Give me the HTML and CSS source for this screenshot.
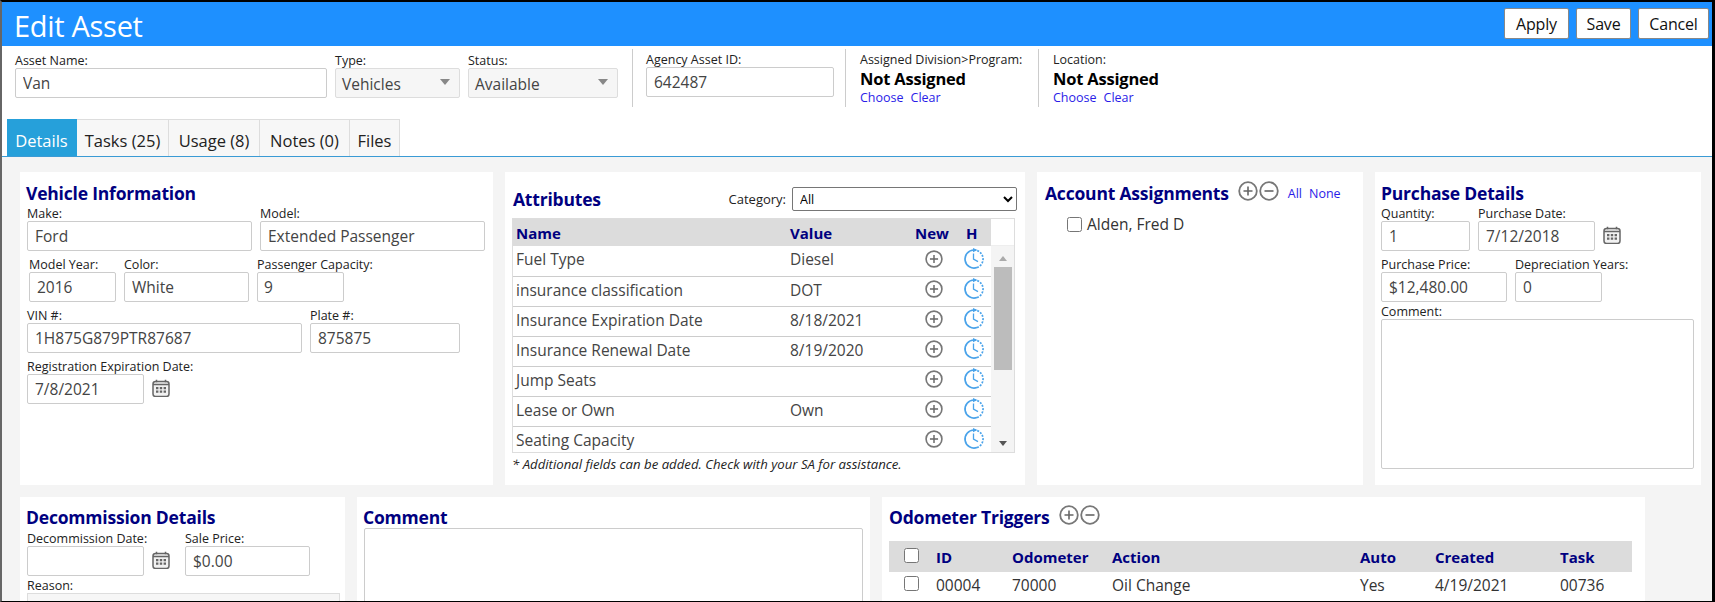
FILE: index.html
```html
<!DOCTYPE html>
<html lang="en">
<head>
  <meta charset="UTF-8">
  <meta name="viewport" content="width=device-width, initial-scale=1.0">
  <title>Edit Asset</title>
  <link rel="stylesheet" href="styles.css">
</head>
<body>
  <svg class="sprites" aria-hidden="true">
    <symbol id="plus" viewBox="0 0 20 20">
      <circle cx="10" cy="10" r="8.8" fill="none" stroke="#777" stroke-width="1.8"/>
      <path d="M10 5.5v9M5.5 10h9" stroke="#666" stroke-width="1.6"/>
    </symbol>
    <symbol id="minus" viewBox="0 0 20 20">
      <circle cx="10" cy="10" r="8.8" fill="none" stroke="#777" stroke-width="1.8"/>
      <path d="M5.5 10h9" stroke="#666" stroke-width="1.6"/>
    </symbol>
    <symbol id="clock" viewBox="0 0 22 22">
      <path d="M11 2A9 9 0 1 0 14 19.5" fill="none" stroke="#4aa3ea" stroke-width="1.7"/>
      <path d="M11 2A9 9 0 0 1 14 19.5" fill="none" stroke="#4aa3ea" stroke-width="1.7" stroke-dasharray="2 1.3"/>
      <path d="M10 0l4.5 2-4.5 2.2z" fill="#4aa3ea"/>
      <path d="M10.5 5.5V11l4.5 2.6" fill="none" stroke="#4aa3ea" stroke-width="1.3"/>
    </symbol>
    <symbol id="calendar" viewBox="0 0 18 18">
      <rect x="1" y="2.5" width="16" height="15" rx="2.5" fill="#f2f2f2" stroke="#666" stroke-width="1.5"/>
      <path d="M1 5.5h16M4.5 0.8v2.5M13.5 0.8v2.5" stroke="#666" stroke-width="1.5"/>
      <path d="M4 8h2.4v2.2H4zM7.8 8h2.4v2.2H7.8zM11.6 8H14v2.2h-2.4zM4 11.6h2.4v2.2H4zM7.8 11.6h2.4v2.2H7.8zM11.6 11.6H14v2.2h-2.4z" fill="#666"/>
    </symbol>
  </svg>

  <div class="frame">
    <header class="title-bar">
      <h1>Edit Asset</h1>
      <div class="actions">
        <button class="action">Apply</button>
        <button class="action">Save</button>
        <button class="action">Cancel</button>
      </div>
    </header>

    <section class="info-bar">
      <div class="info-group first">
        <div class="field w-312"><label>Asset Name:</label><input value="Van"></div>
        <div class="field w-125"><label>Type:</label><div class="fake-select">Vehicles</div></div>
        <div class="field w-150"><label>Status:</label><div class="fake-select">Available</div></div>
      </div>
      <div class="info-group agency">
        <div class="field w-188"><label>Agency Asset ID:</label><input value="642487"></div>
      </div>
      <div class="info-group division">
        <div class="assigned">
          <label>Assigned Division&gt;Program:</label>
          <strong>Not Assigned</strong>
          <div class="links"><a href="#">Choose</a><a href="#">Clear</a></div>
        </div>
      </div>
      <div class="info-group location">
        <div class="assigned">
          <label>Location:</label>
          <strong>Not Assigned</strong>
          <div class="links"><a href="#">Choose</a><a href="#">Clear</a></div>
        </div>
      </div>
    </section>

    <nav class="tabs">
      <a class="tab active" href="#">Details</a>
      <a class="tab" href="#">Tasks (25)</a>
      <a class="tab" href="#">Usage (8)</a>
      <a class="tab" href="#">Notes (0)</a>
      <a class="tab" href="#">Files</a>
    </nav>

    <main class="content">
      <div class="card-row top">
        <section class="card vehicle">
          <h2>Vehicle Information</h2>
          <div class="form-row">
            <div class="field w-225"><label>Make:</label><input value="Ford"></div>
            <div class="field w-225"><label>Model:</label><input value="Extended Passenger"></div>
          </div>
          <div class="form-row indent">
            <div class="field w-87"><label>Model Year:</label><input value="2016"></div>
            <div class="field w-125"><label>Color:</label><input value="White"></div>
            <div class="field w-87"><label>Passenger Capacity:</label><input class="tight" value="9"></div>
          </div>
          <div class="form-row">
            <div class="field w-275"><label>VIN #:</label><input value="1H875G879PTR87687"></div>
            <div class="field w-150"><label>Plate #:</label><input value="875875"></div>
          </div>
          <div class="form-row">
            <div class="field w-117"><label class="nowrap">Registration Expiration Date:</label><input value="7/8/2021"></div>
            <svg class="icon-cal"><use href="#calendar"/></svg>
          </div>
        </section>

        <section class="card attributes">
          <div class="attr-head">
            <h2>Attributes</h2>
            <div class="category">
              <label>Category:</label>
              <select><option>All</option></select>
            </div>
          </div>
          <div class="attr-box">
            <div class="attr-table">
              <table>
                <thead>
                  <tr><th class="c-name">Name</th><th class="c-value">Value</th><th class="c-new">New</th><th class="c-h">H</th></tr>
                </thead>
                <tbody>
                  <tr><td>Fuel Type</td><td>Diesel</td><td class="c-new"><svg class="icon"><use href="#plus"/></svg></td><td class="c-h"><svg class="icon-clock"><use href="#clock"/></svg></td></tr>
                  <tr><td>insurance classification</td><td>DOT</td><td class="c-new"><svg class="icon"><use href="#plus"/></svg></td><td class="c-h"><svg class="icon-clock"><use href="#clock"/></svg></td></tr>
                  <tr><td>Insurance Expiration Date</td><td>8/18/2021</td><td class="c-new"><svg class="icon"><use href="#plus"/></svg></td><td class="c-h"><svg class="icon-clock"><use href="#clock"/></svg></td></tr>
                  <tr><td>Insurance Renewal Date</td><td>8/19/2020</td><td class="c-new"><svg class="icon"><use href="#plus"/></svg></td><td class="c-h"><svg class="icon-clock"><use href="#clock"/></svg></td></tr>
                  <tr><td>Jump Seats</td><td></td><td class="c-new"><svg class="icon"><use href="#plus"/></svg></td><td class="c-h"><svg class="icon-clock"><use href="#clock"/></svg></td></tr>
                  <tr><td>Lease or Own</td><td>Own</td><td class="c-new"><svg class="icon"><use href="#plus"/></svg></td><td class="c-h"><svg class="icon-clock"><use href="#clock"/></svg></td></tr>
                  <tr class="last"><td>Seating Capacity</td><td></td><td class="c-new"><svg class="icon"><use href="#plus"/></svg></td><td class="c-h"><svg class="icon-clock"><use href="#clock"/></svg></td></tr>
                </tbody>
              </table>
            </div>
            <div class="scrollbar">
              <div class="scroll-corner"></div>
              <div class="scroll-track">
                <span class="arrow up"></span>
                <div class="thumb"></div>
                <span class="arrow down"></span>
              </div>
            </div>
          </div>
          <p class="note">* Additional fields can be added. Check with your SA for assistance.</p>
        </section>

        <section class="card accounts">
          <div class="acct-head">
            <h2>Account Assignments</h2>
            <svg class="icon-sm"><use href="#plus"/></svg>
            <svg class="icon-sm"><use href="#minus"/></svg>
            <div class="links"><a href="#">All</a><a href="#">None</a></div>
          </div>
          <label class="check-row"><input type="checkbox">Alden, Fred D</label>
        </section>

        <section class="card purchase">
          <h2>Purchase Details</h2>
          <div class="form-row">
            <div class="field w-89"><label>Quantity:</label><input value="1"></div>
            <div class="field w-117"><label>Purchase Date:</label><input value="7/12/2018"></div>
            <svg class="icon-cal"><use href="#calendar"/></svg>
          </div>
          <div class="form-row">
            <div class="field w-126"><label>Purchase Price:</label><input value="$12,480.00"></div>
            <div class="field w-87"><label class="nowrap">Depreciation Years:</label><input value="0"></div>
          </div>
          <label class="area-label">Comment:</label>
          <textarea class="purchase-comment"></textarea>
        </section>
      </div>

      <div class="card-row">
        <section class="card decommission">
          <h2>Decommission Details</h2>
          <div class="form-row">
            <div class="field w-117"><label>Decommission Date:</label><input></div>
            <svg class="icon-cal"><use href="#calendar"/></svg>
            <div class="field w-125 sale"><label>Sale Price:</label><input value="$0.00"></div>
          </div>
          <label class="area-label">Reason:</label>
          <div class="reason"></div>
        </section>

        <section class="card comment">
          <h2>Comment</h2>
          <textarea class="comment-box"></textarea>
        </section>

        <section class="card odometer">
          <div class="acct-head">
            <h2>Odometer Triggers</h2>
            <svg class="icon-sm"><use href="#plus"/></svg>
            <svg class="icon-sm"><use href="#minus"/></svg>
          </div>
          <table class="odo-table">
            <thead>
              <tr>
                <th class="o-check"><input type="checkbox"></th>
                <th class="o-id">ID</th>
                <th class="o-odo">Odometer</th>
                <th class="o-action">Action</th>
                <th class="o-auto">Auto</th>
                <th class="o-created">Created</th>
                <th>Task</th>
              </tr>
            </thead>
            <tbody>
              <tr>
                <td class="o-check"><input type="checkbox"></td>
                <td>00004</td>
                <td>70000</td>
                <td>Oil Change</td>
                <td>Yes</td>
                <td>4/19/2021</td>
                <td>00736</td>
              </tr>
            </tbody>
          </table>
        </section>
      </div>
    </main>
  </div>
</body>
</html>
```

FILE: styles.css
```css
* {
  box-sizing: border-box;
}
html, body {
  margin: 0;
  height: 100%;
  overflow: hidden;
}
body {
  font-family: "Open Sans", "Noto Sans", sans-serif;
  font-size: 15.5px;
  color: #222;
  background-color: #fff;
}
.sprites {
  display: none;
}
.frame {
  height: 602px;
  border: 2px solid #000;
  border-left: 2px solid #666;
  border-right-width: 3px;
  border-bottom-width: 1px;
  overflow: hidden;
}

/* title bar */
.title-bar {
  height: 44px;
  background-color: #1e90ff;
  display: flex;
  justify-content: space-between;
  padding: 6px 3px 0 12px;
}
.title-bar h1 {
  margin: 0;
  font-size: 29px;
  font-weight: 400;
  line-height: 36px;
  color: #fff;
  letter-spacing: -0.3px;
}
.actions {
  display: flex;
  gap: 7px;
  height: 31px;
}
.action {
  font-family: inherit;
  font-size: 16px;
  color: #111;
  background-color: #fff;
  border: 1px solid #888;
  border-radius: 2px;
  padding: 0;
  letter-spacing: -0.2px;
}
.action:nth-child(1) { width: 65px; }
.action:nth-child(2) { width: 55px; }
.action:nth-child(3) { width: 71px; }

/* info bar */
.info-bar {
  display: flex;
  height: 73px;
  padding-top: 3px;
}
.info-group {
  display: flex;
  border-right: 1px solid #ccc;
  height: 58px;
}
.info-group.first {
  gap: 8px;
  padding: 4px 14px 0 13px;
  width: 631px;
}
.info-group.agency {
  width: 213px;
  padding: 3px 0 0 13px;
}
.info-group.division {
  width: 193px;
  padding-left: 14px;
}
.info-group.location {
  border-right: none;
  padding-left: 14px;
}
.assigned {
  display: flex;
  flex-direction: column;
}
.assigned label {
  font-size: 12.5px;
  line-height: 16px;
  margin-top: 3px;
}
.assigned strong {
  font-size: 16.5px;
  line-height: 22px;
  color: #000;
  letter-spacing: -0.2px;
}
.links {
  display: flex;
  gap: 7px;
  font-size: 12.5px;
  line-height: 16px;
}
.links a {
  color: #2a1be8;
  text-decoration: none;
}

/* shared fields */
.field {
  display: flex;
  flex-direction: column;
  flex: none;
}
.field label, .area-label {
  font-size: 12.5px;
  line-height: 15px;
  white-space: nowrap;
}
.field input, .fake-select {
  font-family: inherit;
  font-size: 15.5px;
  color: #444;
  width: 100%;
  height: 30px;
  padding: 0 7px;
  border: 1px solid #ccc;
  border-radius: 2px;
  background-color: #fff;
}
.field input.tight {
  padding: 0 6px;
}
.fake-select {
  position: relative;
  background-color: #f6f6f6;
  line-height: 30px;
  padding: 0 6px;
  border-color: #ddd;
}
.fake-select::after {
  content: "";
  position: absolute;
  right: 9px;
  top: 10px;
  border-left: 5px solid transparent;
  border-right: 5px solid transparent;
  border-top: 6px solid #888;
}
.w-87 { width: 87px; }
.w-89 { width: 89px; }
.w-117 { width: 117px; }
.w-125 { width: 125px; }
.w-126 { width: 126px; }
.w-150 { width: 150px; }
.w-188 { width: 188px; }
.w-225 { width: 225px; }
.w-275 { width: 275px; }
.w-312 { width: 312px; }

/* tabs */
.tabs {
  display: flex;
  height: 38px;
  padding-left: 5px;
  border-bottom: 1px solid #3a9bd5;
}
.tab {
  display: block;
  font-size: 16.5px;
  line-height: 41px;
  text-align: center;
  color: #222;
  background-color: #f7f7f7;
  border: 1px solid #ddd;
  border-bottom: none;
  border-left: none;
  text-decoration: none;
}
.tab:nth-child(1) { width: 70px; }
.tab:nth-child(2) { width: 92px; }
.tab:nth-child(3) { width: 91px; }
.tab:nth-child(4) { width: 90px; }
.tab:nth-child(5) { width: 50px; }
.tab.active {
  background-color: #26a0da;
  color: #fff;
  border-color: #26a0da;
}

/* cards */
.content {
  background-color: #f4f4f4;
  height: 445px;
  padding: 15px 0 0 18px;
}
.card-row {
  display: flex;
  gap: 12px;
}
.card-row.top {
  margin-bottom: 12px;
}
.card {
  background-color: #fff;
  flex: none;
}
.card h2 {
  margin: 0;
  font-size: 17.5px;
  line-height: 25px;
  font-weight: 700;
  color: #000080;
  letter-spacing: -0.2px;
}
.form-row {
  display: flex;
  gap: 8px;
  margin-top: 6px;
}
.form-row:first-of-type {
  margin-top: 0;
}
.form-row.indent {
  padding-left: 2px;
}
.vehicle {
  width: 473px;
  height: 313px;
  padding: 9px 7px;
}
.vehicle h2 {
  margin-left: -1px;
}
.icon-cal {
  width: 18px;
  height: 18px;
  align-self: flex-end;
  margin-bottom: 7px;
}
.attributes {
  width: 520px;
  height: 313px;
  padding: 15px 7px 0 7px;
}
.attr-head {
  display: flex;
  justify-content: space-between;
  align-items: center;
  height: 24px;
  margin-bottom: 7px;
}
.attr-head h2 {
  margin-left: 1px;
}
.category {
  display: flex;
  align-items: center;
  gap: 6px;
  margin-right: 1px;
}
.category label {
  font-size: 13px;
}
.category select {
  width: 225px;
  height: 24px;
  font-family: inherit;
  font-size: 12.5px;
  border: 1px solid #767676;
  border-radius: 2px;
  background-color: #fff;
  padding-left: 3px;
}
.attr-box {
  display: flex;
  width: 503px;
  height: 235px;
  border: 1px solid #ddd;
}
.attr-table {
  width: 478px;
  overflow: hidden;
}
.attr-table table {
  width: 478px;
  border-collapse: collapse;
  table-layout: fixed;
}
.attr-table th {
  height: 27px;
  background-color: #dcdcdc;
  color: #000080;
  font-size: 15px;
  text-align: left;
  padding: 0 3px;
}
.attr-table td {
  height: 30px;
  padding: 0 3px 3px;
  border-bottom: 1px solid #ccc;
  color: #444;
  white-space: nowrap;
}
.attr-table tr.last td {
  border-bottom: none;
}
.c-name { width: 274px; }
.c-value { width: 115px; }
.attr-table .c-new { width: 64px; text-align: center; padding: 0; }
.attr-table .c-h { width: 25px; text-align: center; padding: 0; }
.attr-table th.c-new { padding-right: 4px; }
.attr-table th.c-h { padding-right: 14px; }
.icon {
  display: block;
  width: 18px;
  height: 18px;
  margin: -4px auto 0;
}
.icon-clock {
  display: block;
  width: 22px;
  height: 22px;
  margin: -4px 0 0 -3px;
}
.scrollbar {
  flex: 1;
  display: flex;
  flex-direction: column;
}
.scroll-corner {
  height: 27px;
  border-bottom: 1px solid #eee;
}
.scroll-track {
  flex: 1;
  background-color: #f4f4f4;
  display: flex;
  flex-direction: column;
  align-items: center;
  padding: 10px 2px 6px;
}
.arrow {
  width: 0;
  height: 0;
  border-left: 4px solid transparent;
  border-right: 4px solid transparent;
}
.arrow.up {
  border-bottom: 5px solid #aaa;
}
.arrow.down {
  border-top: 5px solid #555;
  margin-top: auto;
}
.thumb {
  width: 18px;
  height: 103px;
  margin-top: 6px;
  background-color: #bcbcbc;
}
.note {
  margin: 2px 0 0;
  font-size: 13.2px;
  font-style: italic;
  color: #222;
}
.accounts {
  width: 326px;
  height: 313px;
  padding: 9px 8px;
}
.acct-head {
  display: flex;
  align-items: center;
  gap: 1px;
}
.acct-head h2 {
  margin-right: 8px;
}
.icon-sm {
  width: 20px;
  height: 20px;
  margin-top: -5px;
}
.acct-head .links {
  margin-left: 8px;
}
.check-row {
  display: flex;
  align-items: center;
  margin: 7px 0 0 22px;
  color: #333;
}
.check-row input, .odo-table input {
  width: 15px;
  height: 15px;
  margin: 0 5px 0 0;
}
.purchase {
  width: 326px;
  height: 313px;
  padding: 9px 6px;
}
.area-label {
  display: block;
  margin-top: 2px;
}
.purchase-comment {
  display: block;
  width: 313px;
  height: 150px;
  border: 1px solid #ccc;
  border-radius: 2px;
  resize: none;
}
.decommission {
  width: 325px;
  height: 200px;
  padding: 8px 7px;
}
.decommission h2 {
  margin: 0 0 1px -1px;
}
.sale {
  margin-left: 7px;
}
.reason {
  width: 313px;
  height: 30px;
  background-color: #f6f6f6;
  border: 1px solid #ddd;
}
.comment {
  width: 513px;
  height: 200px;
  padding: 8px 6px;
}
.comment-box {
  display: block;
  width: 499px;
  height: 160px;
  margin: -2px 0 0 1px;
  border: 1px solid #ccc;
  border-radius: 2px;
  resize: none;
}
.odometer {
  width: 763px;
  height: 200px;
  padding: 8px 7px;
}
.odo-table {
  width: 743px;
  margin-top: 11px;
  border-collapse: collapse;
  table-layout: fixed;
}
.odo-table th {
  height: 31px;
  background-color: #dcdcdc;
  color: #000080;
  font-size: 15px;
  text-align: left;
  padding: 0;
}
.odo-table td {
  height: 30px;
  padding: 0 0 4px;
  color: #333;
}
.o-check { width: 47px; padding-left: 15px !important; }
.o-id { width: 76px; }
.o-odo { width: 100px; }
.o-action { width: 248px; }
.o-auto { width: 75px; }
.o-created { width: 125px; }
```
